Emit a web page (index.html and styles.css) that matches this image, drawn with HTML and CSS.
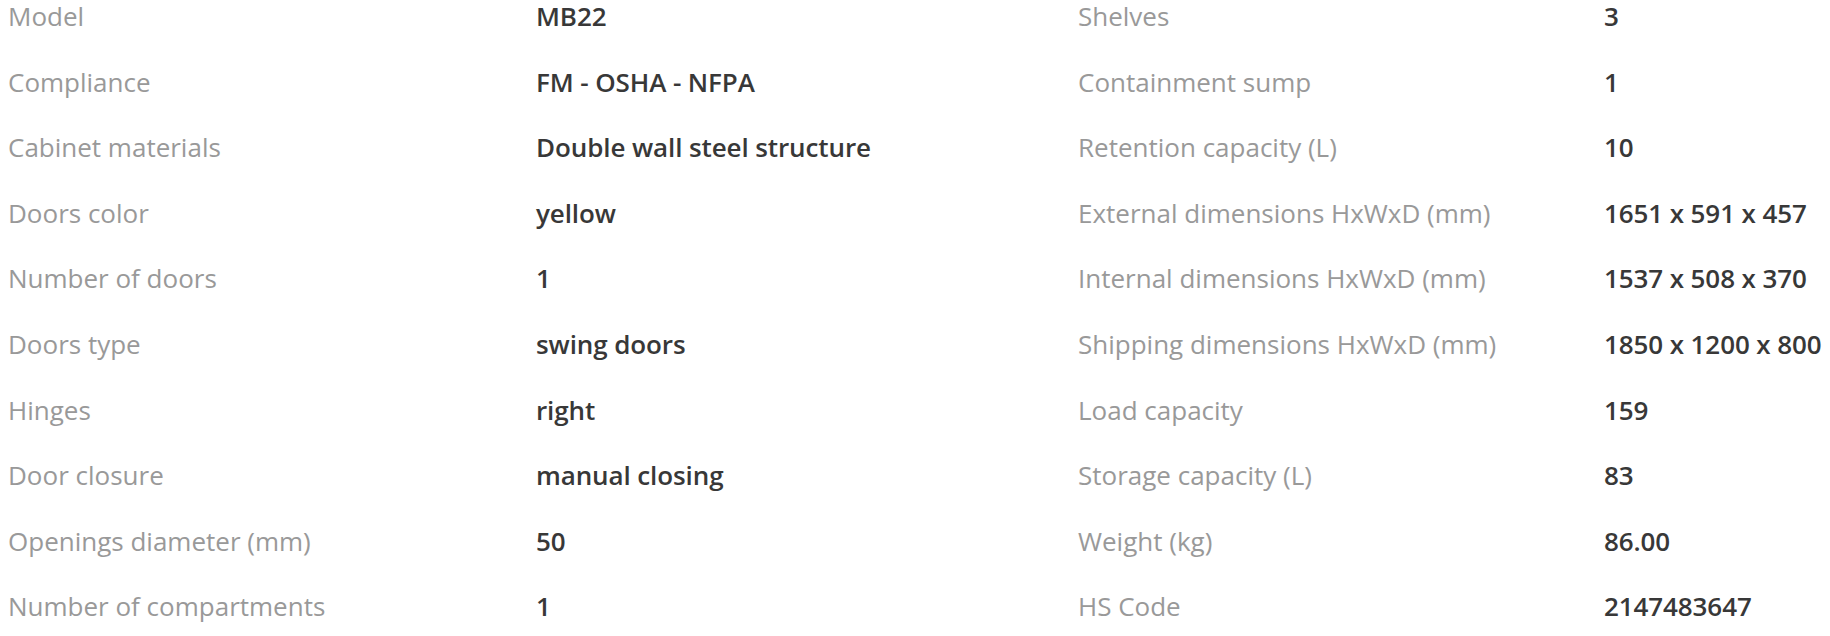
FILE: index.html
```html
<!DOCTYPE html>
<html lang="en">
<head>
<meta charset="utf-8">
<title>Specifications</title>
<link rel="stylesheet" href="styles.css">
</head>
<body>
<div class="specs">
  <div class="row"><span class="label">Model</span><span class="value">MB22</span><span class="label">Shelves</span><span class="value">3</span></div>
  <div class="row"><span class="label">Compliance</span><span class="value">FM - OSHA - NFPA</span><span class="label">Containment sump</span><span class="value">1</span></div>
  <div class="row"><span class="label">Cabinet materials</span><span class="value">Double wall steel structure</span><span class="label">Retention capacity (L)</span><span class="value">10</span></div>
  <div class="row"><span class="label">Doors color</span><span class="value">yellow</span><span class="label">External dimensions HxWxD (mm)</span><span class="value">1651 x 591 x 457</span></div>
  <div class="row"><span class="label">Number of doors</span><span class="value">1</span><span class="label">Internal dimensions HxWxD (mm)</span><span class="value">1537 x 508 x 370</span></div>
  <div class="row"><span class="label">Doors type</span><span class="value">swing doors</span><span class="label">Shipping dimensions HxWxD (mm)</span><span class="value">1850 x 1200 x 800</span></div>
  <div class="row"><span class="label">Hinges</span><span class="value">right</span><span class="label">Load capacity</span><span class="value">159</span></div>
  <div class="row"><span class="label">Door closure</span><span class="value">manual closing</span><span class="label">Storage capacity (L)</span><span class="value">83</span></div>
  <div class="row"><span class="label">Openings diameter (mm)</span><span class="value">50</span><span class="label">Weight (kg)</span><span class="value">86.00</span></div>
  <div class="row"><span class="label">Number of compartments</span><span class="value">1</span><span class="label">HS Code</span><span class="value">2147483647</span></div>
</div>
</body>
</html>
```
FILE: styles.css
```css
html, body {
  margin: 0;
  padding: 0;
  background: #ffffff;
  overflow: hidden;
}
body {
  font-family: "Open Sans", "Noto Sans", sans-serif;
  font-size: 26px;
}
.specs {
  display: flex;
  flex-direction: column;
  padding-left: 8px;
}
.row {
  display: grid;
  grid-template-columns: 528px 542px 526px auto;
  line-height: 33.8px;
  padding-bottom: 31.8px;
  white-space: nowrap;
}
.label {
  color: #999999;
  font-weight: 400;
}
.value {
  color: #383838;
  font-weight: 600;
  letter-spacing: -0.1px;
}
```
